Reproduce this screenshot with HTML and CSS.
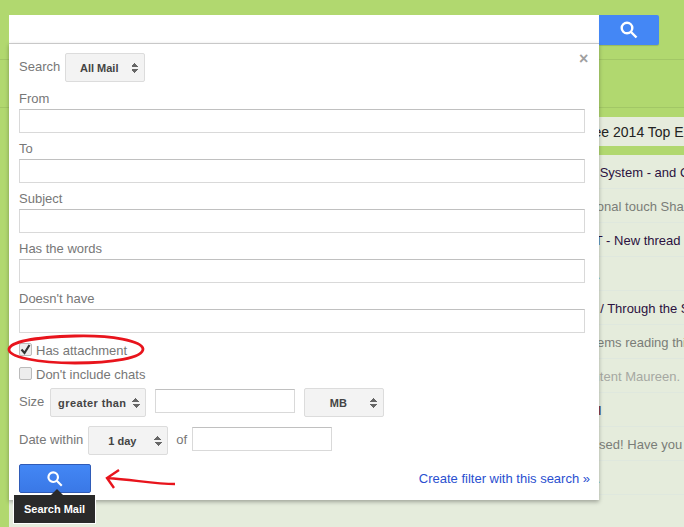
FILE: index.html
```html
<!DOCTYPE html>
<html lang="en">
<head>
<meta charset="utf-8">
<title>Search Mail</title>
<link rel="stylesheet" href="styles.css">
</head>
<body>
<div class="page">
  <header class="topbar">
    <div class="searchbox"></div>
    <button class="search-top" type="button">
      <svg class="icon-search" width="20" height="20" viewBox="0 0 20 20"><circle cx="8" cy="8" r="5.3"/><path d="M12 12l5.5 5.5"/></svg>
    </button>
  </header>
  <div class="toolbar"></div>
  <main class="content">
    <div class="promo"><span>Register to see 2014 Top Exams</span></div>
    <div class="list">
      <div class="row dark"><span>Operating System - and Other</span></div>
      <div class="row grey"><span>Add a personal touch Share your</span></div>
      <div class="row dark"><span>Support IT - New thread in</span></div>
      <div class="row link"><span>Read more from this forum page here.</span></div>
      <div class="row dark"><span>Looking / Through the System</span></div>
      <div class="row grey"><span>Having problems reading this</span></div>
      <div class="row faint"><span>Content Maureen.</span></div>
      <div class="row dark"><span>Messages from the forum thread: I</span></div>
      <div class="row grey"><span>You have been missed! Have you seen</span></div>
      <div class="row link"><span>Read more from this forum page here.</span></div>
    </div>
  </main>

  <form class="panel">
    <span class="close">×</span>
    <div class="search-row">
      <span class="label">Search</span>
      <div class="select w80"><span>All Mail</span><i class="arrows"></i></div>
    </div>
    <div class="field first"><label class="label">From</label><div class="input"></div></div>
    <div class="field"><label class="label">To</label><div class="input"></div></div>
    <div class="field"><label class="label">Subject</label><div class="input"></div></div>
    <div class="field"><label class="label">Has the words</label><div class="input"></div></div>
    <div class="field"><label class="label">Doesn't have</label><div class="input"></div></div>
    <div class="check-row">
      <span class="check">
        <svg width="11" height="11" viewBox="0 0 11 11"><path d="M1.5 5.5l3 3.5 5-8" fill="none" stroke="#333" stroke-width="2.2"/></svg>
      </span>
      <span class="label">Has attachment</span>
    </div>
    <div class="check-row">
      <span class="check"></span>
      <span class="label">Don't include chats</span>
    </div>
    <div class="size-row">
      <span class="label">Size</span>
      <div class="select w96"><span class="wide">greater than</span><i class="arrows"></i></div>
      <div class="input w140"></div>
      <div class="select w80"><span>MB</span><i class="arrows"></i></div>
    </div>
    <div class="date-row">
      <span class="label">Date within</span>
      <div class="select w80"><span>1 day</span><i class="arrows"></i></div>
      <span class="label">of</span>
      <div class="input w140"></div>
    </div>
    <div class="footer">
      <button class="search-btn" type="button">
        <svg class="icon-search" width="18" height="18" viewBox="0 0 20 20"><circle cx="8" cy="8" r="5.3"/><path d="M12 12l5.5 5.5"/></svg>
      </button>
      <a class="filter-link">Create filter with this search »</a>
    </div>
  </form>

  <div class="tooltip"><span>Search Mail</span></div>

  <svg class="annot" width="684" height="527" viewBox="0 0 684 527">
    <path d="M9 349C11 341 40 337 75 336C112 335 142 341 143 349C143 358 112 363 75 363C38 363 8 357 9 349Z" fill="none" stroke="#e8141c" stroke-width="2.8"/>
    <path d="M175 484C155 484 135 480 107 478M119 470L107 478L114 488" fill="none" stroke="#e8141c" stroke-width="2.4"/>
  </svg>
</div>
</body>
</html>
```

FILE: styles.css
```css
* { box-sizing: border-box; }
html, body { margin: 0; padding: 0; }
body { font-family: "Liberation Sans", Arial, sans-serif; }
.page {
  position: relative;
  width: 684px;
  height: 527px;
  overflow: hidden;
  background: #b1d86f;
}
.topbar {
  display: flex;
  align-items: flex-start;
  height: 60px;
  padding: 15px 0 0 9px;
  border-bottom: 1px solid #a2c766;
}
.searchbox { width: 590px; height: 28px; background: #fff; }
.search-top {
  display: flex;
  align-items: center;
  justify-content: center;
  width: 60px;
  height: 30px;
  padding: 0;
  border: 0;
  border-radius: 0 2px 2px 0;
  background: #4487f5;
  box-shadow: 0 1px 1px rgba(0,0,0,.15);
}
.icon-search { fill: none; stroke: #fff; stroke-width: 2.4; }
.toolbar { height: 48px; border-bottom: 1px solid #a2c766; }
.content { margin: 9px 0 0 9px; }
.promo {
  height: 29px;
  background: #e6ecdd;
  font-size: 14px;
  line-height: 30px;
  color: #222;
  white-space: nowrap;
  overflow: hidden;
  padding-left: 506px;
}
.list { margin-top: 9px; height: 372px; background: #e5ecdc; }
.row {
  height: 34px;
  border-bottom: 1px solid #dfe8de;
  font-size: 13px;
  line-height: 36px;
  white-space: nowrap;
  overflow: hidden;
}
.row span { display: block; }
.row.dark { color: #2b1140; }
.row.grey { color: #7a7d78; }
.row.link { color: #5a9fd0; }
.row.faint { color: #a5a8a2; }
.list .row:nth-child(1) { padding-left: 530px; }
.list .row:nth-child(2) { padding-left: 525px; }
.list .row:nth-child(3) { padding-left: 533px; }
.list .row:nth-child(4) { padding-left: 371px; }
.list .row:nth-child(5) { padding-left: 542px; }
.list .row:nth-child(6) { padding-left: 515px; }
.list .row:nth-child(7) { padding-left: 567px; }
.list .row:nth-child(8) { padding-left: 394px; }
.list .row:nth-child(9) { padding-left: 480px; }
.list .row:nth-child(10) { padding-left: 371px; }

.panel {
  position: absolute;
  left: 9px;
  top: 43px;
  width: 590px;
  height: 457px;
  padding: 9px 9px 0 10px;
  background: #fff;
  border-top: 1px solid #c8c8c8;
  box-shadow: 0 2px 4px rgba(0,0,0,.3);
}
.close {
  position: absolute;
  left: 570px;
  top: 6px;
  font-size: 16px;
  line-height: 18px;
  font-weight: bold;
  color: #a0a0a0;
}
.label { font-size: 13px; color: #777; white-space: nowrap; }
.search-row { display: flex; align-items: center; gap: 5px; height: 29px; }
.search-row .label { margin-top: -2px; }
.select {
  position: relative;
  display: flex;
  align-items: center;
  justify-content: center;
  height: 29px;
  padding-right: 12px;
  border: 1px solid #dcdcdc;
  border-radius: 2px;
  background: #f3f3f3;
  font-size: 11px;
  font-weight: bold;
  color: #444;
  white-space: nowrap;
}
.select .wide { letter-spacing: .4px; }
.w80 { width: 80px; }
.w96 { width: 96px; }
.w140 { width: 140px; }
.arrows {
  position: absolute;
  right: 5px;
  top: 9px;
  width: 8px;
  height: 10px;
  background:
    linear-gradient(to bottom right, transparent 50%, #666 50%) 0 0 / 4px 4px no-repeat,
    linear-gradient(to bottom left, transparent 50%, #666 50%) 4px 0 / 4px 4px no-repeat,
    linear-gradient(to top right, transparent 50%, #666 50%) 0 6px / 4px 4px no-repeat,
    linear-gradient(to top left, transparent 50%, #666 50%) 4px 6px / 4px 4px no-repeat;
}
.field { margin-top: 2px; padding-right: 5px; }
.field.first { margin-top: 3px; }
.field .label { display: block; height: 24px; line-height: 27px; }
.input {
  height: 24px;
  background: #fff;
  border: 1px solid #d9d9d9;
  border-top-color: #c0c0c0;
}
.check-row { display: flex; align-items: center; gap: 4px; height: 24px; }
.field + .check-row { margin-top: 5px; }
.check {
  display: flex;
  align-items: center;
  justify-content: center;
  width: 13px;
  height: 13px;
  margin-top: -2px;
  border: 1px solid #bbb;
  border-radius: 2px;
  background: #ededed;
}
.size-row { display: flex; align-items: flex-start; gap: 9px; margin-top: 2px; height: 29px; }
.size-row .label { line-height: 27px; margin-right: -3px; }
.size-row .input, .date-row .input { margin-top: 1px; }
.date-row { display: flex; align-items: flex-start; margin-top: 9px; height: 29px; }
.date-row .label { line-height: 27px; }
.date-row .label:first-child { margin-right: 5px; }
.date-row .select + .label { margin-left: 8px; margin-right: 5px; }
.footer {
  display: flex;
  align-items: center;
  justify-content: space-between;
  margin-top: 9px;
  height: 29px;
}
.search-btn {
  display: flex;
  align-items: center;
  justify-content: center;
  width: 72px;
  height: 29px;
  padding: 0;
  border: 1px solid #2f5bb7;
  border-radius: 2px;
  background: linear-gradient(#4387f5, #3a78e6);
}
.filter-link { font-size: 13px; color: #2a4fd0; margin-top: -1px; }
.tooltip {
  position: absolute;
  left: 13px;
  top: 494px;
  width: 83px;
  height: 30px;
  display: flex;
  align-items: center;
  justify-content: center;
  background: #2a2a2a;
  border: 1px solid #fff;
  color: #fff;
  font-size: 11px;
  font-weight: bold;
}
.tooltip::before {
  content: "";
  position: absolute;
  left: 37px;
  top: -6px;
  width: 0;
  height: 0;
  border-left: 6px solid transparent;
  border-right: 6px solid transparent;
  border-bottom: 6px solid #2a2a2a;
}
.annot { position: absolute; left: 0; top: 0; pointer-events: none; }
```
